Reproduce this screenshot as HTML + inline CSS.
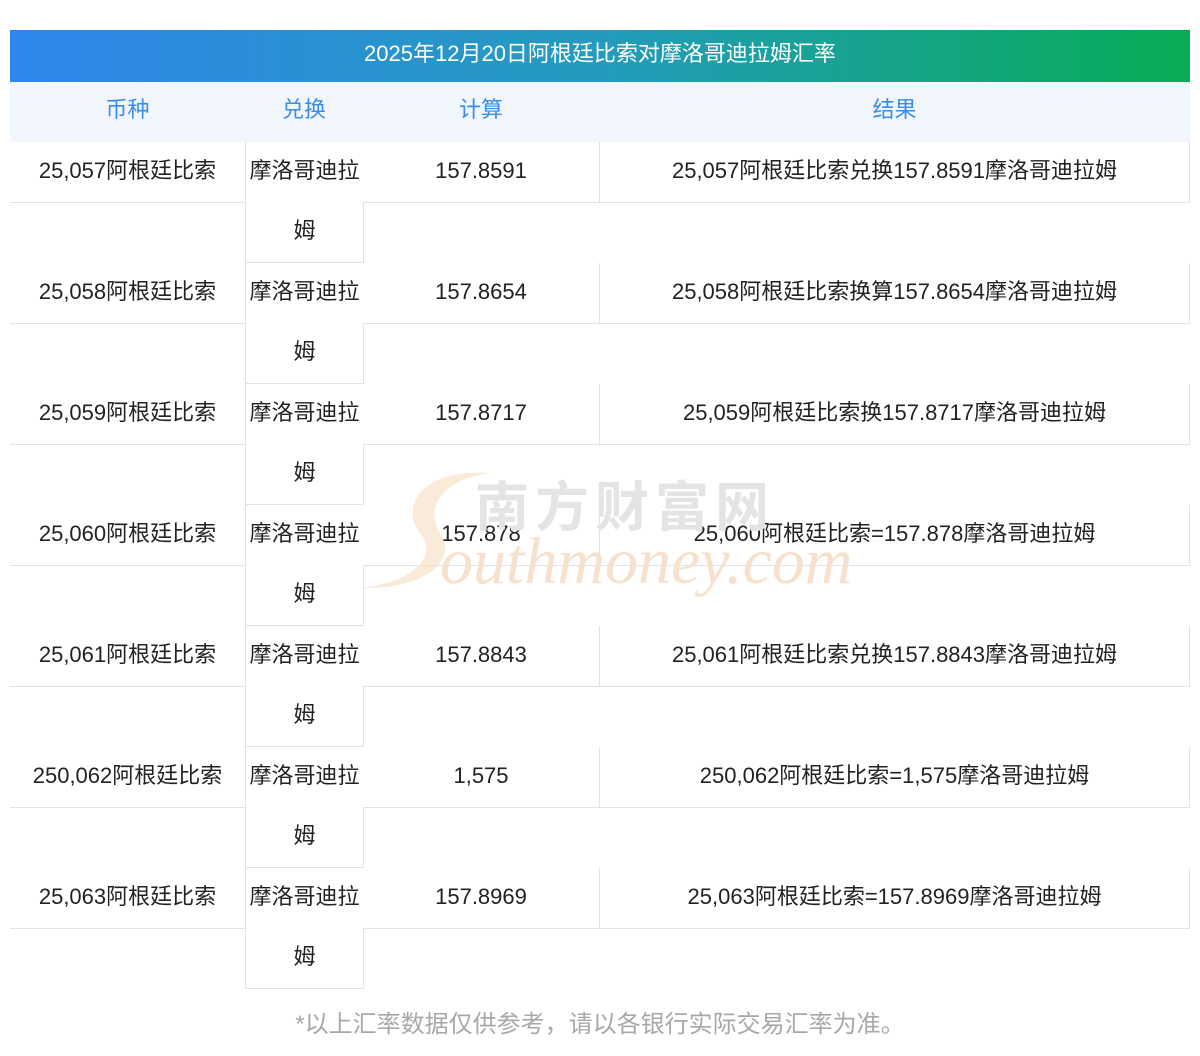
<!DOCTYPE html>
<html><head><meta charset="utf-8">
<style>
*{margin:0;padding:0;box-sizing:border-box}
body{width:1200px;height:1056px;background:#fff;font-family:"Liberation Sans","Noto Sans CJK SC",sans-serif;position:relative;overflow:hidden;color:#222}
.t{position:absolute;left:10px;top:30px;width:1180px;height:52px;background:linear-gradient(90deg,#2f86ec,#249bbd 50%,#07ad55);color:#fff;font-size:22px;text-align:center;line-height:48px}
.h{position:absolute;top:82px;height:61px;background:#f1f6fd;color:#3a8de6;font-size:22px;text-align:center;line-height:56px;border-bottom:1px solid #dfe3ec}
.c{position:absolute;font-size:22px;text-align:center;line-height:58px;border-color:#dfe3ec;border-style:solid;border-width:0 0 1px 0;background:#fff}
.a{left:10px;width:235px;height:61px}
.b{left:245px;width:119px;height:121px;border-width:0 1px 1px 1px;line-height:60px;padding-top:0}
.b span{display:block;line-height:58px;height:60px}
.d{left:363px;width:236px;height:61px}
.e{left:599px;width:591px;height:61px;border-width:0 1px 1px 1px}
.wm{position:absolute;left:360px;top:468px;width:500px;height:135px;pointer-events:none}
.f{position:absolute;top:1008px;left:0;width:1200px;text-align:center;color:#a8a8a8;font-size:24px;line-height:34px}
</style></head><body>
<div class="t">2025年12月20日阿根廷比索对摩洛哥迪拉姆汇率</div>
<div class="h" style="left:10px;width:236px;border-right:1px solid #dfe3ec">币种</div>
<div class="h" style="left:245px;width:119px;border-right:1px solid #dfe3ec">兑换</div>
<div class="h" style="left:363px;width:237px;border-right:1px solid #dfe3ec">计算</div>
<div class="h" style="left:599px;width:591px">结果</div>

<div class="c a" style="top:142px">25,057阿根廷比索</div><div class="c b" style="top:142px"><span>摩洛哥迪拉</span><span>姆</span></div><div class="c d" style="top:142px">157.8591</div><div class="c e" style="top:142px">25,057阿根廷比索兑换157.8591摩洛哥迪拉姆</div>
<div class="c a" style="top:263px">25,058阿根廷比索</div><div class="c b" style="top:263px"><span>摩洛哥迪拉</span><span>姆</span></div><div class="c d" style="top:263px">157.8654</div><div class="c e" style="top:263px">25,058阿根廷比索换算157.8654摩洛哥迪拉姆</div>
<div class="c a" style="top:384px">25,059阿根廷比索</div><div class="c b" style="top:384px"><span>摩洛哥迪拉</span><span>姆</span></div><div class="c d" style="top:384px">157.8717</div><div class="c e" style="top:384px">25,059阿根廷比索换157.8717摩洛哥迪拉姆</div>
<div class="c a" style="top:505px">25,060阿根廷比索</div><div class="c b" style="top:505px"><span>摩洛哥迪拉</span><span>姆</span></div><div class="c d" style="top:505px">157.878</div><div class="c e" style="top:505px">25,060阿根廷比索=157.878摩洛哥迪拉姆</div>
<div class="c a" style="top:626px">25,061阿根廷比索</div><div class="c b" style="top:626px"><span>摩洛哥迪拉</span><span>姆</span></div><div class="c d" style="top:626px">157.8843</div><div class="c e" style="top:626px">25,061阿根廷比索兑换157.8843摩洛哥迪拉姆</div>
<div class="c a" style="top:747px">250,062阿根廷比索</div><div class="c b" style="top:747px"><span>摩洛哥迪拉</span><span>姆</span></div><div class="c d" style="top:747px">1,575</div><div class="c e" style="top:747px">250,062阿根廷比索=1,575摩洛哥迪拉姆</div>
<div class="c a" style="top:868px">25,063阿根廷比索</div><div class="c b" style="top:868px"><span>摩洛哥迪拉</span><span>姆</span></div><div class="c d" style="top:868px">157.8969</div><div class="c e" style="top:868px">25,063阿根廷比索=157.8969摩洛哥迪拉姆</div>

<svg class="wm" viewBox="0 0 500 135">
<path d="M130 5 C60 0 40 40 60 65 C80 90 50 115 0 120 C60 122 100 95 80 65 C65 40 80 12 130 5Z" fill="#f7dcc0" opacity="0.6"/>
<text x="115" y="58" font-size="54" font-family="Noto Sans CJK SC,sans-serif" fill="#e4e4e4" font-weight="bold" letter-spacing="6">南方财富网</text>
<text x="80" y="115" font-size="66" font-family="Liberation Serif,serif" font-style="italic" fill="#f6e2cc">outhmoney.com</text>
</svg>

<div class="f">*以上汇率数据仅供参考，请以各银行实际交易汇率为准。</div>
</body></html>
